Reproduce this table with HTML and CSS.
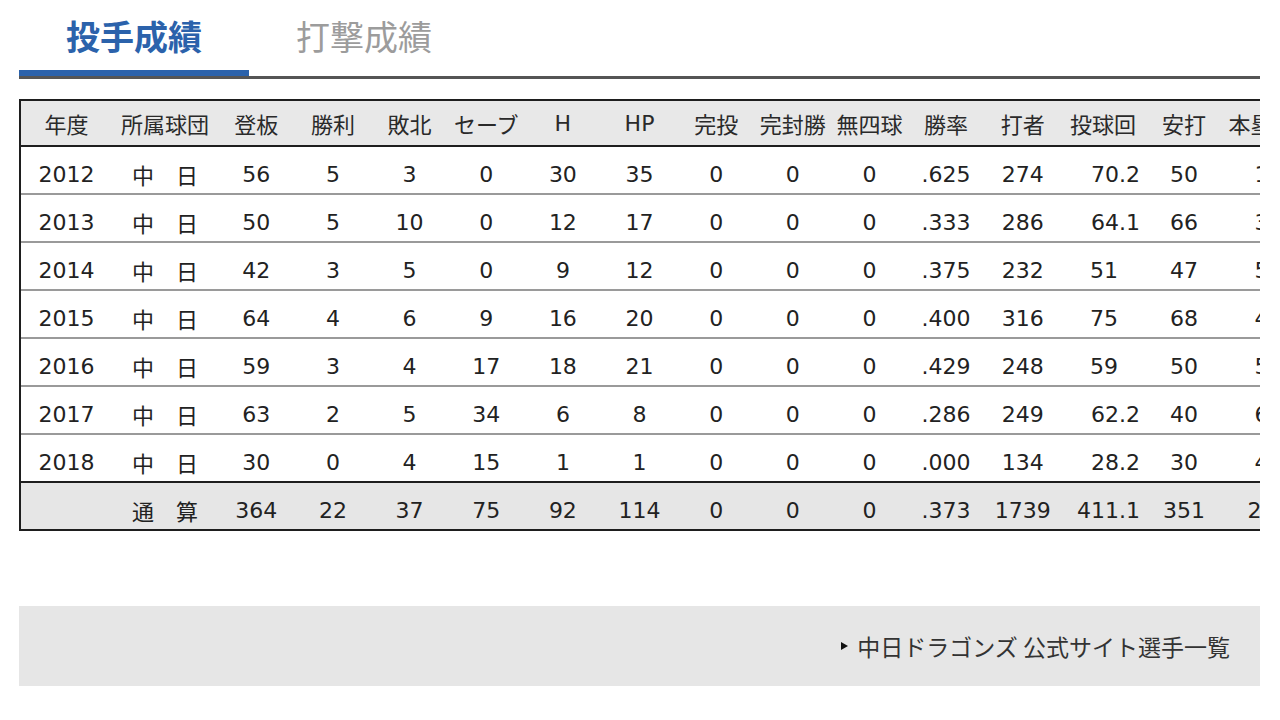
FILE: index.html
```html
<!DOCTYPE html>
<html lang="ja">
<head>
<meta charset="utf-8">
<title>投手成績</title>
<link rel="stylesheet" href="styles.css">
</head>
<body>
<div class="page">
  <div class="tabs">
    <div class="tab active">投手成績</div>
    <div class="tab">打撃成績</div>
  </div>

  <div class="table-wrap">
    <table class="stats">
      <colgroup>
        <col class="c-year"><col class="c-team">
        <col class="c-num"><col class="c-num"><col class="c-num"><col class="c-num"><col class="c-num"><col class="c-num">
        <col class="c-num"><col class="c-num"><col class="c-num"><col class="c-num"><col class="c-num">
        <col class="c-ip"><col class="c-hit"><col class="c-hr">
      </colgroup>
      <thead>
        <tr>
          <th>年度</th><th>所属球団</th><th>登板</th><th>勝利</th><th>敗北</th><th>セーブ</th><th>H</th><th>HP</th>
          <th>完投</th><th>完封勝</th><th>無四球</th><th>勝率</th><th>打者</th><th>投球回</th><th>安打</th><th>本塁打</th>
        </tr>
      </thead>
      <tbody>
        <tr><td>2012</td><td class="team">中　日</td><td>56</td><td>5</td><td>3</td><td>0</td><td>30</td><td>35</td><td>0</td><td>0</td><td>0</td><td>.625</td><td>274</td><td class="ip">70.2</td><td>50</td><td>1</td></tr>
        <tr><td>2013</td><td class="team">中　日</td><td>50</td><td>5</td><td>10</td><td>0</td><td>12</td><td>17</td><td>0</td><td>0</td><td>0</td><td>.333</td><td>286</td><td class="ip">64.1</td><td>66</td><td>3</td></tr>
        <tr><td>2014</td><td class="team">中　日</td><td>42</td><td>3</td><td>5</td><td>0</td><td>9</td><td>12</td><td>0</td><td>0</td><td>0</td><td>.375</td><td>232</td><td class="ip int">51</td><td>47</td><td>5</td></tr>
        <tr><td>2015</td><td class="team">中　日</td><td>64</td><td>4</td><td>6</td><td>9</td><td>16</td><td>20</td><td>0</td><td>0</td><td>0</td><td>.400</td><td>316</td><td class="ip int">75</td><td>68</td><td>4</td></tr>
        <tr><td>2016</td><td class="team">中　日</td><td>59</td><td>3</td><td>4</td><td>17</td><td>18</td><td>21</td><td>0</td><td>0</td><td>0</td><td>.429</td><td>248</td><td class="ip int">59</td><td>50</td><td>5</td></tr>
        <tr><td>2017</td><td class="team">中　日</td><td>63</td><td>2</td><td>5</td><td>34</td><td>6</td><td>8</td><td>0</td><td>0</td><td>0</td><td>.286</td><td>249</td><td class="ip">62.2</td><td>40</td><td>6</td></tr>
        <tr class="last-year"><td>2018</td><td class="team">中　日</td><td>30</td><td>0</td><td>4</td><td>15</td><td>1</td><td>1</td><td>0</td><td>0</td><td>0</td><td>.000</td><td>134</td><td class="ip">28.2</td><td>30</td><td>4</td></tr>
        <tr class="total"><td></td><td class="team">通　算</td><td>364</td><td>22</td><td>37</td><td>75</td><td>92</td><td>114</td><td>0</td><td>0</td><td>0</td><td>.373</td><td>1739</td><td class="ip">411.1</td><td>351</td><td>28</td></tr>
      </tbody>
    </table>
  </div>

  <div class="site-link">
    <a class="site-link-anchor" href="#">中日ドラゴンズ 公式サイト選手一覧</a>
  </div>
</div>
</body>
</html>
```

FILE: styles.css
```css
html, body {
  margin: 0;
  padding: 0;
  background: #ffffff;
}

body {
  font-family: "DejaVu Sans", "Noto Sans CJK JP", sans-serif;
  color: #222222;
}

.page {
  padding: 0 20px 0 19px;
}

/* Tabs */
.tabs {
  display: flex;
  border-bottom: 3px solid #555555;
}

.tab {
  width: 230px;
  text-align: center;
  font-family: "Noto Sans CJK JP", sans-serif;
  font-size: 34px;
  line-height: 34px;
  padding: 19px 0 17px;
  border-bottom: 6px solid transparent;
  color: #9c9c9c;
}

.tab.active {
  color: #2b62ab;
  font-weight: 700;
  border-bottom-color: #2b62ab;
}

/* Table */
.table-wrap {
  margin-top: 20px;
  overflow: hidden;
}

.stats {
  box-sizing: border-box;
  width: 1283px;
  table-layout: fixed;
  border-collapse: separate;
  border-spacing: 0;
  border: 2px solid #1e1e1e;
  font-size: 22px;
}

.c-year { width: 91px; }
.c-team { width: 106px; }
.c-num { width: 76.65px; }
.c-ip { width: 84px; }
.c-hit { width: 78px; }

.stats th,
.stats td {
  padding: 0;
  text-align: center;
  vertical-align: middle;
  white-space: nowrap;
  box-sizing: border-box;
}

.stats th {
  height: 46px;
  font-weight: normal;
  color: #2a2a2a;
  background: #e8e8e8;
  border-bottom: 2px solid #1e1e1e;
}

.stats td {
  height: 48px;
  padding-top: 9px;
  color: #222222;
  border-bottom: 2px solid #9a9a9a;
}

.stats td.team {
  padding-top: 7px;
}

.stats tr.last-year td {
  border-bottom-color: #1e1e1e;
}

.stats tr.total td {
  background: #e6e6e6;
  border-bottom: none;
  height: 46px;
}

.stats td.ip {
  text-align: right;
  padding-right: 5px;
}

.stats td.ip.int {
  padding-right: 27px;
}

/* Footer link */
.site-link {
  margin-top: 75px;
  height: 80px;
  background: #e6e6e6;
  display: flex;
  align-items: center;
  justify-content: flex-end;
  padding-right: 30px;
}

.site-link-anchor {
  display: flex;
  align-items: center;
  gap: 9px;
  font-family: "Noto Sans CJK JP", sans-serif;
  font-size: 23px;
  color: #333333;
  text-decoration: none;
}

.site-link-anchor::before {
  content: "";
  width: 0;
  height: 0;
  border-left: 7px solid #111111;
  border-top: 4px solid transparent;
  border-bottom: 4px solid transparent;
}
```
